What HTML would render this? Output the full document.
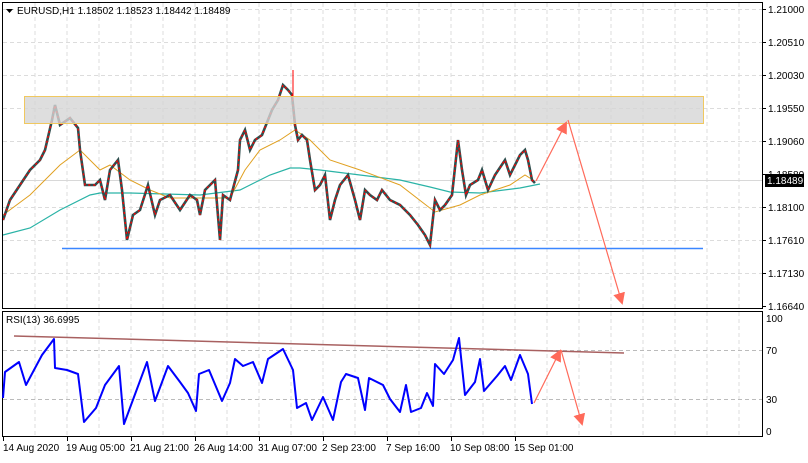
<!DOCTYPE html>
<html><head><meta charset="utf-8"><style>
html,body{margin:0;padding:0;background:#fff;width:808px;height:463px;overflow:hidden}
svg{display:block}
text{font-family:"Liberation Sans",sans-serif;font-size:10px;fill:#000}
</style></head><body>
<svg width="808" height="463" viewBox="0 0 808 463" xmlns="http://www.w3.org/2000/svg">
<defs>
<marker id="ah2" markerWidth="12" markerHeight="12" refX="10" refY="6" orient="auto" markerUnits="userSpaceOnUse" viewBox="0 0 12 12">
<path d="M0,0 L12,6 L0,12 z" fill="#ff6a5a"/></marker>
</defs>
<rect width="808" height="463" fill="#fff"/>
<g stroke="#dcdcdc" stroke-dasharray="4,3" stroke-width="1">
<path d="M35,3V308M67,3V308M99,3V308M131,3V308M163,3V308M195,3V308M227,3V308M259,3V308M291,3V308M323,3V308M355,3V308M387,3V308M419,3V308M451,3V308M483,3V308M515,3V308M547,3V308M579,3V308M611,3V308M643,3V308M675,3V308M707,3V308M739,3V308"/>
<path d="M3,9.5H762M3,42.5H762M3,75.5H762M3,108.5H762M3,141.5H762M3,207.5H762M3,240.5H762M3,273.5H762"/>
<path d="M35,312V436M67,312V436M99,312V436M131,312V436M163,312V436M195,312V436M227,312V436M259,312V436M291,312V436M323,312V436M355,312V436M387,312V436M419,312V436M451,312V436M483,312V436M515,312V436M547,312V436M579,312V436M611,312V436M643,312V436M675,312V436M707,312V436M739,312V436"/>
</g>
<path d="M3,180.5H762" stroke="#d8d8d8"/>
<g stroke="#bbb" stroke-dasharray="4,3"><path d="M3,350.5H762M3,399.5H762"/></g>
<path d="M62,248.5H703" stroke="#3a86ff" stroke-width="1.5"/>
<polyline fill="none" stroke="#2ab3a6" stroke-width="1.2" points="3,235 30,228 60,210 90,195 100,193 130,193 200,195 240,190 270,175 290,168 300,168 320,170 360,175 400,180 430,187 450,192 480,193 520,188 540,184"/>
<polyline fill="none" stroke="#e0a020" stroke-width="1" points="3,215 30,195 60,165 80,150 100,170 110,165 130,180 150,190 170,198 200,198 230,198 245,170 260,150 280,140 295,130 310,140 330,160 360,170 400,185 435,212 460,205 480,195 510,185 525,175 533,180"/>
<polyline fill="none" stroke="#2f4f4f" stroke-width="2.6" points="3,220 10,200 20,185 30,170 40,160 45,150 52,120 55,105 60,125 70,118 78,128 80,150 85,185 95,185 100,180 105,200 110,170 118,160 122,190 127,240 133,215 140,210 148,185 155,215 160,200 170,195 180,210 190,195 197,200 200,215 205,190 210,185 215,180 220,240 223,195 230,200 238,170 240,140 245,130 250,150 255,140 262,135 268,120 272,110 278,100 283,85 288,90 292,95 295,125 298,140 302,135 307,140 310,160 315,190 320,185 325,175 330,220 335,200 340,185 348,175 355,200 360,220 365,190 370,195 377,200 382,190 390,200 400,205 410,215 418,225 425,235 430,245 435,200 440,210 445,205 452,195 458,140 462,170 466,195 470,185 478,180 482,170 488,190 495,175 505,160 510,175 515,165 520,155 525,150 528,160 532,180 535,183"/>
<polyline fill="none" stroke="#ff0000" stroke-width="1.4" stroke-dasharray="2,3" points="3,220 10,200 20,185 30,170 40,160 45,150 52,120 55,105 60,125 70,118 78,128 80,150 85,185 95,185 100,180 105,200 110,170 118,160 122,190 127,240 133,215 140,210 148,185 155,215 160,200 170,195 180,210 190,195 197,200 200,215 205,190 210,185 215,180 220,240 223,195 230,200 238,170 240,140 245,130 250,150 255,140 262,135 268,120 272,110 278,100 283,85 288,90 292,95 295,125 298,140 302,135 307,140 310,160 315,190 320,185 325,175 330,220 335,200 340,185 348,175 355,200 360,220 365,190 370,195 377,200 382,190 390,200 400,205 410,215 418,225 425,235 430,245 435,200 440,210 445,205 452,195 458,140 462,170 466,195 470,185 478,180 482,170 488,190 495,175 505,160 510,175 515,165 520,155 525,150 528,160 532,180 535,183"/>
<path d="M293,70V100" stroke="#f00"/>
<rect x="24.5" y="96.5" width="679" height="27" fill="#d6d6d6" fill-opacity="0.8" stroke="#f0c860" stroke-width="1"/>
<path d="M536,181 L566,123" stroke="#ff6a5a" stroke-width="1.2" marker-end="url(#ah2)"/>
<path d="M568,120 L622,303" stroke="#ff6a5a" stroke-width="1.2" marker-end="url(#ah2)"/>
<rect x="2.5" y="2.5" width="760" height="306" fill="none" stroke="#000"/>
<rect x="2.5" y="311.5" width="760" height="125" fill="none" stroke="#000"/>
<path d="M6,9 L13,9 L9.5,13 z" fill="#000"/>
<text x="17" y="14">EURUSD,H1  1.18502 1.18523 1.18442 1.18489</text>
<g stroke="#000"><path d="M762,9.5h4M762,42.5h4M762,75.5h4M762,108.5h4M762,141.5h4M762,174.5h4M762,207.5h4M762,240.5h4M762,273.5h4M762,306.5h4"/></g>
<text x="768" y="13">1.21000</text>
<text x="768" y="46">1.20510</text>
<text x="768" y="79">1.20030</text>
<text x="768" y="112">1.19550</text>
<text x="768" y="145">1.19060</text>
<text x="768" y="178">1.18580</text>
<text x="768" y="211">1.18100</text>
<text x="768" y="244">1.17610</text>
<text x="768" y="277">1.17130</text>
<text x="768" y="310">1.16640</text>
<rect x="765" y="174" width="39" height="13" fill="#000"/>
<text x="767" y="184" style="fill:#fff">1.18489</text>
<text x="6" y="323">RSI(13) 36.6995</text>
<text x="766" y="322">100</text>
<text x="766" y="354">70</text>
<text x="766" y="403">30</text>
<text x="766" y="435">0</text>
<path d="M14,336 L624,353" stroke="#a86060" stroke-width="1.5"/>
<polyline fill="none" stroke="#0000ff" stroke-width="2" stroke-linejoin="round" points="3,398 5,372 19,362 26,385 42,355 54,339 55,368 67,370 78,374 84,422 96,408 105,385 119,366 124,424 134,397 147,362 155,401 168,366 180,382 188,393 196,411 199,374 209,370 222,401 230,383 235,359 243,366 253,362 262,383 268,359 283,349 293,370 297,408 306,403 312,420 323,397 333,420 341,382 346,374 358,378 365,410 369,378 383,385 390,399 400,412 406,385 411,412 421,408 427,393 433,406 435,364 444,374 453,360 459,338 465,395 475,382 480,359 484,391 497,376 505,366 511,380 520,355 528,374 532,404"/>
<path d="M534,403 L560,351" stroke="#ff6a5a" stroke-width="1.2" marker-end="url(#ah2)"/>
<path d="M561,350 L582,424" stroke="#ff6a5a" stroke-width="1.2" marker-end="url(#ah2)"/>
<g stroke="#000"><path d="M3.5,437v4M67.5,437v4M131.5,437v4M195.5,437v4M259.5,437v4M323.5,437v4M387.5,437v4M451.5,437v4M515.5,437v4"/></g>
<text x="3" y="451">14 Aug 2020</text>
<text x="66" y="451">19 Aug 05:00</text>
<text x="130" y="451">21 Aug 21:00</text>
<text x="194" y="451">26 Aug 14:00</text>
<text x="258" y="451">31 Aug 07:00</text>
<text x="322" y="451">2 Sep 23:00</text>
<text x="386" y="451">7 Sep 16:00</text>
<text x="450" y="451">10 Sep 08:00</text>
<text x="514" y="451">15 Sep 01:00</text>
</svg>
</body></html>
